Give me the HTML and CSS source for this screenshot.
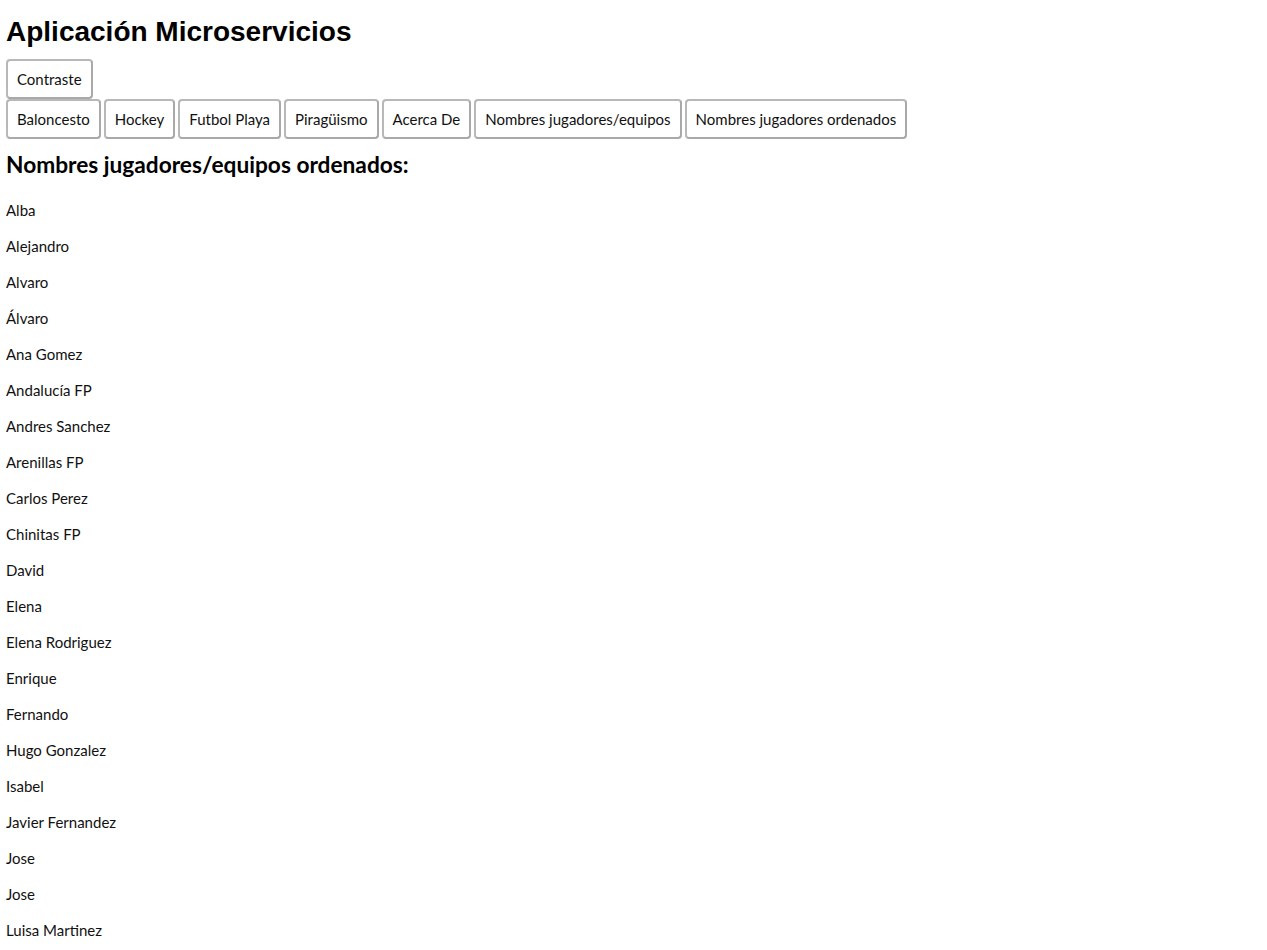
FILE: index.html
```html
<!DOCTYPE html>
<html lang="es">
<head>
<meta charset="utf-8">
<title>Aplicación Microservicios</title>
<link rel="stylesheet" href="styles.css">
</head>
<body>
<h1 class="title">Aplicación Microservicios</h1>
<div class="toolbar">
  <button class="btn">Contraste</button>
</div>
<nav class="nav">
  <button class="btn">Baloncesto</button>
  <button class="btn">Hockey</button>
  <button class="btn">Futbol Playa</button>
  <button class="btn">Piragüismo</button>
  <button class="btn">Acerca De</button>
  <button class="btn">Nombres jugadores/equipos</button>
  <button class="btn">Nombres jugadores ordenados</button>
</nav>
<section class="content">
  <h2 class="section-title">Nombres jugadores/equipos ordenados:</h2>
  <div class="names">
    <p class="name">Alba</p>
    <p class="name">Alejandro</p>
    <p class="name">Alvaro</p>
    <p class="name">Álvaro</p>
    <p class="name">Ana Gomez</p>
    <p class="name">Andalucía FP</p>
    <p class="name">Andres Sanchez</p>
    <p class="name">Arenillas FP</p>
    <p class="name">Carlos Perez</p>
    <p class="name">Chinitas FP</p>
    <p class="name">David</p>
    <p class="name">Elena</p>
    <p class="name">Elena Rodriguez</p>
    <p class="name">Enrique</p>
    <p class="name">Fernando</p>
    <p class="name">Hugo Gonzalez</p>
    <p class="name">Isabel</p>
    <p class="name">Javier Fernandez</p>
    <p class="name">Jose</p>
    <p class="name">Jose</p>
    <p class="name">Luisa Martinez</p>
  </div>
</section>
</body>
</html>
```
FILE: styles.css
```css
html, body {
  margin: 0;
  padding: 0;
  background: #ffffff;
}
body {
  padding: 0 6px;
  font-family: Lato, "Noto Sans", sans-serif;
  color: #111111;
}
.title {
  font-family: "Liberation Sans", Arial, sans-serif;
  font-size: 28px;
  font-weight: bold;
  line-height: 32px;
  margin: 16px 0 11px;
  color: #000;
}
.toolbar {
  display: flex;
}
.nav {
  display: flex;
  gap: 3px;
}
.btn {
  font-family: Lato, "Noto Sans", sans-serif;
  font-size: 15px;
  line-height: 20px;
  padding: 8px 9px;
  background: #fff;
  color: #111;
  border: 2px solid #b8b8b8;
  border-right-color: #a9a9a9;
  border-bottom-color: #a9a9a9;
  border-radius: 4px;
  cursor: pointer;
}
.section-title {
  font-size: 22.7px;
  font-weight: bold;
  line-height: 28px;
  margin: 12px 0 21px;
  color: #000;
}
.names {
  display: flex;
  flex-direction: column;
}
.name {
  font-size: 15px;
  line-height: 20px;
  margin: 0 0 16px;
}
```
